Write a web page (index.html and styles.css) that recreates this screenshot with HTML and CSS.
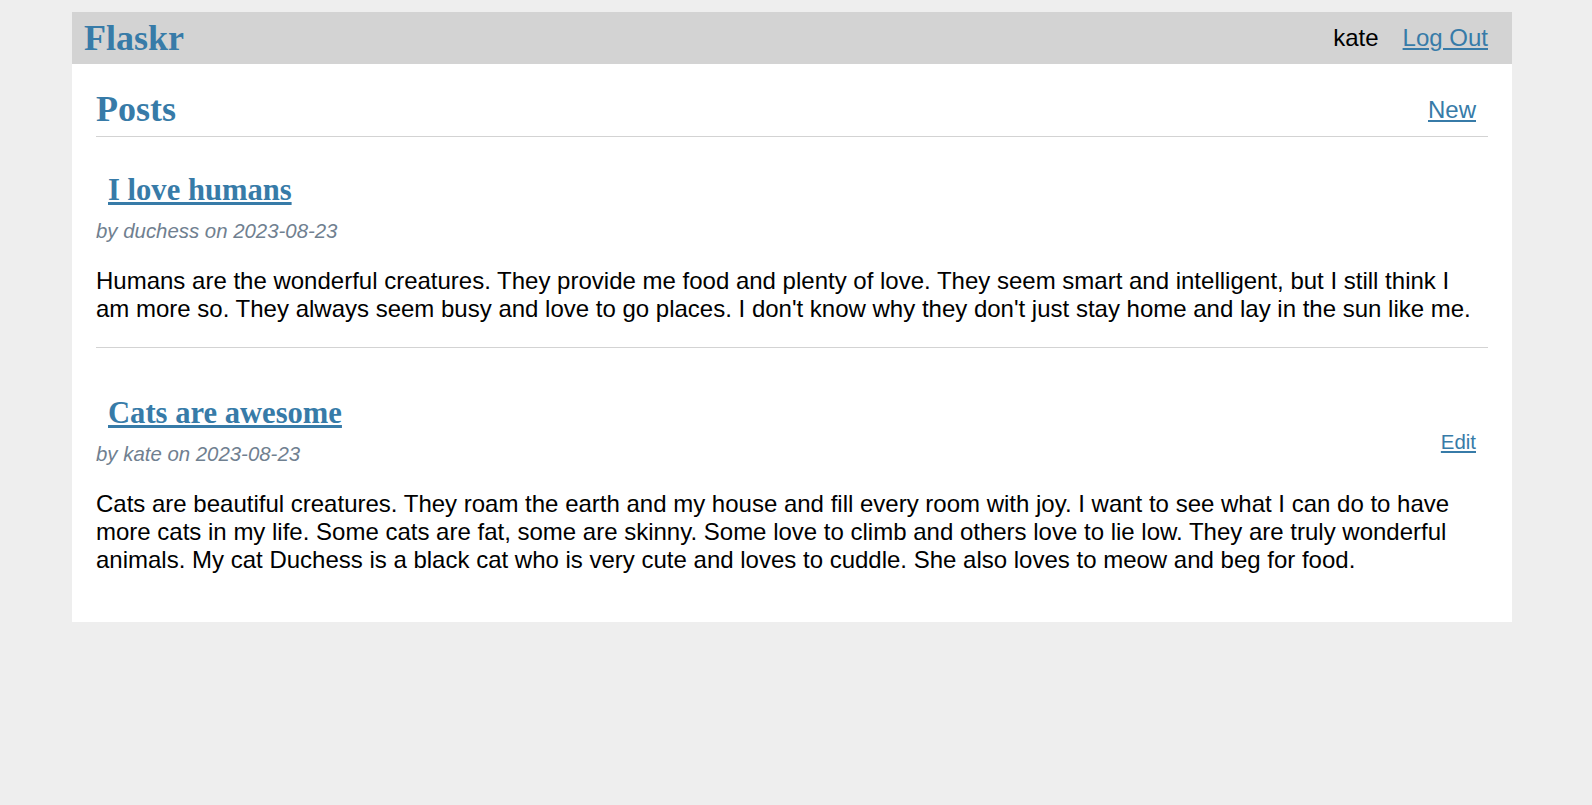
FILE: index.html
```html
<!DOCTYPE html>
<html lang="en">
<head>
<meta charset="utf-8">
<title>Posts - Flaskr</title>
<link rel="stylesheet" href="styles.css">
</head>
<body class="page">
  <nav class="nav">
    <h1 class="brand"><a class="brand-link" href="#">Flaskr</a></h1>
    <ul class="nav-links">
      <li><span class="nav-item">kate</span></li>
      <li><a class="nav-item link" href="#">Log Out</a></li>
    </ul>
  </nav>
  <section class="content">
    <header class="page-header">
      <h1 class="page-title">Posts</h1>
      <a class="action link" href="#">New</a>
    </header>

    <article class="post">
      <header class="post-header">
        <div class="post-meta">
          <h1 class="post-title"><a class="post-link link" href="#">I love humans</a></h1>
          <div class="about">by duchess on 2023-08-23</div>
        </div>
      </header>
      <p class="post-body">Humans are the wonderful creatures. They provide me food and plenty of love. They seem smart and intelligent, but I still think I am more so. They always seem busy and love to go places. I don't know why they don't just stay home and lay in the sun like me.</p>
    </article>
    <hr class="divider">

    <article class="post">
      <header class="post-header">
        <div class="post-meta">
          <h1 class="post-title"><a class="post-link link" href="#">Cats are awesome</a></h1>
          <div class="about">by kate on 2023-08-23</div>
        </div>
        <a class="action link" href="#">Edit</a>
      </header>
      <p class="post-body">Cats are beautiful creatures. They roam the earth and my house and fill every room with joy. I want to see what I can do to have more cats in my life. Some cats are fat, some are skinny. Some love to climb and others love to lie low. They are truly wonderful animals. My cat Duchess is a black cat who is very cute and loves to cuddle. She also loves to meow and beg for food.</p>
    </article>
  </section>
</body>
</html>
```

FILE: styles.css
```css
html {
  background: #eeeeee;
  font-family: "Liberation Sans", Arial, sans-serif;
  font-size: 24px;
  color: #000;
}

.page {
  width: 1440px;
  margin: 12px 0 0 72px;
  background: #ffffff;
}

.link {
  color: #377ba8;
}

/* nav */
.nav {
  background: #d3d3d3;
  display: flex;
  align-items: center;
  padding: 0 12px;
}

.brand {
  flex: auto;
  margin: 0;
  font-family: "Liberation Serif", "Times New Roman", serif;
  font-size: 36px;
  font-weight: bold;
  line-height: normal;
}

.brand-link {
  color: #377ba8;
  text-decoration: none;
}

.nav-links {
  display: flex;
  list-style: none;
  margin: 0;
  padding: 0;
}

.nav-item {
  display: block;
  padding: 12px;
  line-height: normal;
}

/* content */
.content {
  padding: 0 24px 24px;
}

.page-header {
  display: flex;
  align-items: flex-end;
  border-bottom: 1px solid #d3d3d3;
}

.page-title {
  flex: auto;
  margin: 24px 0 6px 0;
  font-family: "Liberation Serif", "Times New Roman", serif;
  font-size: 36px;
  font-weight: bold;
  color: #377ba8;
  line-height: normal;
}

.action {
  display: block;
  padding: 12px;
}

.post-header {
  display: flex;
  align-items: flex-end;
  font-size: 20.4px;
}

.post-meta {
  flex: auto;
}

.post-title {
  margin: 24px 0 0 0;
  font-family: "Liberation Serif", "Times New Roman", serif;
  font-size: 30.6px;
  font-weight: bold;
  line-height: normal;
}

.post-link {
  display: inline-block;
  padding: 12px;
}

.about {
  color: #708090;
  font-style: italic;
}

.post-body {
  margin: 24px 0;
  white-space: pre-line;
}

.divider {
  border: none;
  border-top: 1px solid #d3d3d3;
  margin: 12px 0;
}
```
